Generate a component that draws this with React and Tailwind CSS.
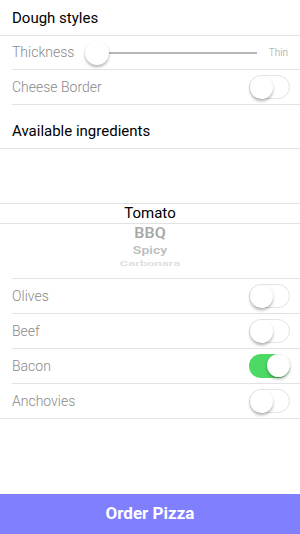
import React from 'react'

const font = { fontFamily: '"Helvetica Neue", Roboto, "Liberation Sans", sans-serif' }

const Switch = ({ on }) => (
  <div
    className={`relative w-[41px] h-[24px] rounded-full ${on ? 'bg-[#4cd964]' : 'bg-white border border-[#e3e3e3]'}`}
  >
    <div
      className={`absolute top-[0px] w-[23px] h-[23px] rounded-full bg-white shadow-[0_2px_3px_rgba(0,0,0,0.3)] ${on ? 'right-[0px]' : 'left-[0px]'}`}
    />
  </div>
)

const ToggleRow = ({ label, on }) => (
  <div className="h-[35px] flex items-center justify-between pr-[10px] ml-3 border-b border-[#e2e2e2]">
    <span className="text-[14px] font-light text-[#8a8a8a]">{label}</span>
    <Switch on={on} />
  </div>
)

export default function App() {
  return (
    <div className="w-[300px] h-[534px] flex flex-col bg-white" style={font}>
      {/* Dough styles */}
      <div className="h-[36px] flex items-center px-3 pt-[1px] border-b border-[#e2e2e2]">
        <span className="text-[15px] text-black">Dough styles</span>
      </div>

      <div className="h-[34px] flex items-center ml-3 pr-3 border-b border-[#e2e2e2]">
        <span className="text-[14px] font-light text-[#8a8a8a]">Thickness</span>
        <div className="flex-1 relative h-[24px] ml-[11px] mr-[12px] flex items-center">
          <div className="w-[24px] h-[24px] rounded-full bg-white shadow-[0_2px_3px_rgba(0,0,0,0.3)] z-10 shrink-0" />
          <div className="flex-1 h-[2px] bg-[#b8b8b8]" />
        </div>
        <span className="text-[10px] font-light text-[#9a9a9a]">Thin</span>
      </div>

      <div className="h-[35px] flex items-center justify-between pr-[10px] ml-3 border-b border-[#e2e2e2]">
        <span className="text-[14px] font-light text-[#8a8a8a]">Cheese Border</span>
        <Switch on={false} />
      </div>

      {/* Available ingredients */}
      <div className="h-[44px] flex items-end pb-[6px] px-3 border-b border-[#e2e2e2]">
        <span className="text-[15px] text-black">Available ingredients</span>
      </div>

      {/* Picker */}
      <div className="h-[129px] flex flex-col overflow-hidden">
        <div className="h-[54px]" />
        <div className="h-[21px] flex items-center justify-center border-y border-[#e2e2e2]">
          <span className="text-[15px] text-black">Tomato</span>
        </div>
        <div className="flex flex-col items-center pt-[1px]">
          <span className="text-[16px] font-semibold text-[#a8a8a8] leading-[18px] scale-y-90">BBQ</span>
          <span className="text-[14px] font-semibold text-[#bdbdbd] leading-[15px] scale-y-75">Spicy</span>
          <span className="text-[13px] font-semibold text-[#dedede] leading-[11px] scale-y-50">Carbonara</span>
        </div>
      </div>

      <div className="ml-3 border-t border-[#e2e2e2]" />

      <ToggleRow label="Olives" on={false} />
      <ToggleRow label="Beef" on={false} />
      <ToggleRow label="Bacon" on={true} />
      <div className="h-[35px] flex items-center justify-between pr-[10px] pl-3 border-b border-[#e2e2e2]">
        <span className="text-[14px] font-light text-[#8a8a8a]">Anchovies</span>
        <Switch on={false} />
      </div>

      <div className="flex-1" />

      <button className="h-[40px] w-full bg-[#8080ff] flex items-center justify-center">
        <span className="text-[17px] font-bold text-white">Order Pizza</span>
      </button>
    </div>
  )
}
